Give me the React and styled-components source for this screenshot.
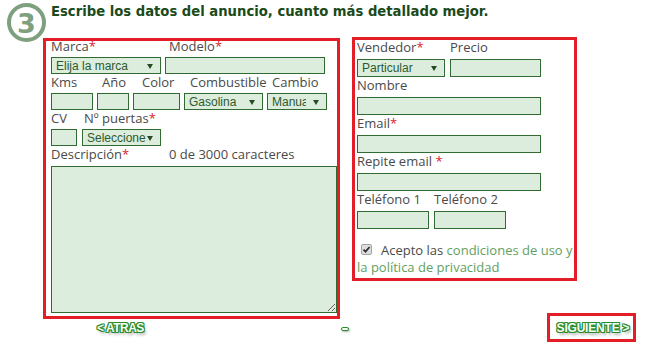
import React from 'react';
import styled, { createGlobalStyle } from 'styled-components';

const Global = createGlobalStyle`
  html, body { margin: 0; padding: 0; background: #fff; }
  body {
    font-family: "Open Sans", "Noto Sans", sans-serif;
    font-size: 13px;
    color: #4a4a4a;
  }
  * { box-sizing: border-box; }
`;

const RED = '#e41e26';
const FIELD_BG = '#ddeddd';
const FIELD_BORDER = '#306b30';

const Page = styled.div`
  width: 660px;
  height: 353px;
  overflow: hidden;
`;

const Header = styled.header`
  display: flex;
  align-items: flex-start;
  height: 37px;
`;

const Badge = styled.svg`
  flex: none;
  width: 41px;
  height: 41px;
  margin: 2px 0 0 6px;
  overflow: visible;
`;

const Title = styled.h1`
  margin: 4px 0 0 4px;
  font-family: "DejaVu Sans", Verdana, sans-serif;
  font-size: 13.2px;
  line-height: 16px;
  font-weight: bold;
  color: #1a4a1a;
  white-space: nowrap;
`;

const FormsRow = styled.div`
  display: flex;
  align-items: flex-start;
  gap: 12px;
  margin-left: 43px;
`;

const Box = styled.section`
  flex: none;
  width: ${p => p.$w}px;
  height: ${p => p.$h}px;
  margin-top: ${p => p.$top || 0}px;
  border: 3px solid ${RED};
  padding: 0 0 0 ${p => p.$pl}px;
`;

const Stack = styled.div`
  display: flex;
  flex-direction: column;
  margin-top: ${p => p.$shift || 0}px;
`;

const LabelRow = styled.div`
  display: flex;
  height: 15px;
  line-height: 15px;
  margin-bottom: ${p => p.$gap}px;
  white-space: nowrap;
`;

const Lbl = styled.span`
  flex: none;
  width: ${p => (p.$w ? `${p.$w}px` : 'auto')};
`;

const Req = styled.span`
  color: #d8232c;
`;

const ControlRow = styled.div`
  display: flex;
  gap: ${p => p.$gap || 4}px;
  margin-bottom: 1px;
`;

const TextInput = styled.input`
  flex: none;
  width: ${p => p.$w}px;
  height: ${p => p.$h}px;
  margin: 0;
  padding: 0 3px;
  border: 1px solid ${FIELD_BORDER};
  border-radius: 0;
  background: ${FIELD_BG};
  font: 12px "Liberation Sans", Arial, sans-serif;
  color: #2d5a2d;
  outline: none;
`;

const SelectWrap = styled.div`
  flex: none;
  position: relative;
  width: ${p => p.$w}px;
  height: ${p => p.$h}px;
  &::after {
    content: '';
    position: absolute;
    right: 8px;
    top: 50%;
    margin-top: -2px;
    border-left: 3px solid transparent;
    border-right: 3px solid transparent;
    border-top: 5px solid #274a27;
    pointer-events: none;
  }
`;

const Select = styled.select`
  appearance: none;
  -webkit-appearance: none;
  display: block;
  width: 100%;
  height: 100%;
  margin: 0;
  padding: 0 ${p => p.$pr || 16}px 0 4px;
  border: 1px solid ${FIELD_BORDER};
  border-radius: 0;
  background: ${FIELD_BG};
  font: 12px "Liberation Sans", Arial, sans-serif;
  color: #2d5a2d;
  outline: none;
`;

const TextArea = styled.textarea`
  display: block;
  width: ${p => p.$w}px;
  height: ${p => p.$h}px;
  margin: 0;
  border: 1px solid ${FIELD_BORDER};
  border-radius: 0;
  background: ${FIELD_BG};
  outline: none;
  font: 12px "Liberation Sans", Arial, sans-serif;
`;

const Terms = styled.p`
  margin: 12px 0 0;
  line-height: 17px;
  white-space: nowrap;
`;

const Check = styled.svg`
  width: 11px;
  height: 11px;
  margin: 0 9px 0 4px;
  vertical-align: 0;
`;

const Link = styled.a`
  color: #62a062;
  text-decoration: none;
`;

const NavRow = styled.nav`
  display: flex;
  align-items: center;
  width: 636px;
  height: 29px;
  margin-top: -6px;
  padding-left: 97px;
`;

const OutlineText = styled.a`
  font-family: "Liberation Sans", Arial, sans-serif;
  font-weight: bold;
  font-size: ${p => p.$size}px;
  letter-spacing: ${p => p.$ls || 0}px;
  color: #f4fff4;
  text-decoration: none;
  white-space: nowrap;
  text-shadow:
    -1px -1px 0 #2b8c2b, 1px -1px 0 #2b8c2b,
    -1px 1px 0 #2b8c2b, 1px 1px 0 #2b8c2b,
    0 -1px 0 #2b8c2b, 0 1px 0 #2b8c2b,
    -1px 0 0 #2b8c2b, 1px 0 0 #2b8c2b,
    2px 3px 3px rgba(0, 0, 0, 0.35);
`;

const Middle = styled.div`
  flex: 1;
  display: flex;
  justify-content: center;
`;

const Pill = styled.span`
  width: 8px;
  height: 4px;
  margin-top: 3px;
  border: 1px solid #2b8c2b;
  border-radius: 2px;
  background: #f4fff4;
  box-shadow: 1px 1px 2px rgba(0, 0, 0, 0.3);
`;

const NextBox = styled.div`
  flex: none;
  width: 89px;
  height: 29px;
  border: 3px solid ${RED};
  display: flex;
  align-items: center;
  justify-content: center;
  padding-left: 3px;
`;

export default function App() {
  return (
    <Page>
      <Global />
      <Header>
        <Badge viewBox="0 0 41 41">
          <circle cx="20.5" cy="20.5" r="17.5" fill="none" stroke="#7fa07f" strokeWidth="4" />
          <text
            x="20.5"
            y="31"
            textAnchor="middle"
            fontFamily="DejaVu Sans, sans-serif"
            fontWeight="bold"
            fontSize="27"
            fill="#7fa07f"
          >
            3
          </text>
        </Badge>
        <Title>Escribe los datos del anuncio, cuanto más detallado mejor.</Title>
      </Header>

      <FormsRow>
        <Box $w={297} $h={281} $top={1} $pl={5}>
          <Stack $shift={-2}>
            <LabelRow $gap={3}>
              <Lbl $w={118}>Marca<Req>*</Req></Lbl>
              <Lbl>Modelo<Req>*</Req></Lbl>
            </LabelRow>
            <ControlRow $gap={4}>
              <SelectWrap $w={110} $h={17}>
                <Select defaultValue="m"><option value="m">Elija la marca</option></Select>
              </SelectWrap>
              <TextInput $w={160} $h={17} />
            </ControlRow>

            <LabelRow $gap={3}>
              <Lbl $w={51}>Kms</Lbl>
              <Lbl $w={40}>Año</Lbl>
              <Lbl $w={48}>Color</Lbl>
              <Lbl $w={82}>Combustible</Lbl>
              <Lbl>Cambio</Lbl>
            </LabelRow>
            <ControlRow $gap={4}>
              <TextInput $w={42} $h={17} />
              <TextInput $w={32} $h={17} />
              <TextInput $w={47} $h={17} />
              <SelectWrap $w={79} $h={17}>
                <Select defaultValue="g"><option value="g">Gasolina</option></Select>
              </SelectWrap>
              <SelectWrap $w={60} $h={17}>
                <Select defaultValue="m" $pr={20}><option value="m">Manual</option></Select>
              </SelectWrap>
            </ControlRow>

            <LabelRow $gap={3}>
              <Lbl $w={33}>CV</Lbl>
              <Lbl>Nº puertas<Req>*</Req></Lbl>
            </LabelRow>
            <ControlRow $gap={5}>
              <TextInput $w={26} $h={17} />
              <SelectWrap $w={79} $h={17}>
                <Select defaultValue="s" $pr={12}><option value="s">Seleccione</option></Select>
              </SelectWrap>
            </ControlRow>

            <LabelRow $gap={4}>
              <Lbl $w={118}>Descripción<Req>*</Req></Lbl>
              <Lbl>0 de 3000 caracteres</Lbl>
            </LabelRow>
            <TextArea $w={286} $h={147} />
          </Stack>
        </Box>

        <Box $w={225} $h={244} $pl={2}>
          <Stack>
            <LabelRow $gap={4}>
              <Lbl $w={93}>Vendedor<Req>*</Req></Lbl>
              <Lbl>Precio</Lbl>
            </LabelRow>
            <ControlRow $gap={5}>
              <SelectWrap $w={88} $h={18}>
                <Select defaultValue="p"><option value="p">Particular</option></Select>
              </SelectWrap>
              <TextInput $w={91} $h={18} />
            </ControlRow>

            <LabelRow $gap={4}>
              <Lbl>Nombre</Lbl>
            </LabelRow>
            <ControlRow>
              <TextInput $w={184} $h={18} />
            </ControlRow>

            <LabelRow $gap={4}>
              <Lbl>Email<Req>*</Req></Lbl>
            </LabelRow>
            <ControlRow>
              <TextInput $w={184} $h={18} />
            </ControlRow>

            <LabelRow $gap={4}>
              <Lbl>Repite email <Req>*</Req></Lbl>
            </LabelRow>
            <ControlRow>
              <TextInput $w={184} $h={18} />
            </ControlRow>

            <LabelRow $gap={4}>
              <Lbl $w={77}>Teléfono 1</Lbl>
              <Lbl>Teléfono 2</Lbl>
            </LabelRow>
            <ControlRow $gap={5}>
              <TextInput $w={72} $h={18} />
              <TextInput $w={72} $h={18} />
            </ControlRow>

            <Terms>
              <Check viewBox="0 0 11 11">
                <rect x="0.5" y="0.5" width="10" height="10" rx="1.5" fill="#dedede" stroke="#a3a3a3" />
                <path d="M2.5 5.6 L4.5 7.6 L8.6 3" fill="none" stroke="#2f2f2f" strokeWidth="1.8" />
              </Check>
              Acepto las <Link href="#">condiciones de uso y</Link>
              <br />
              <Link href="#">la política de privacidad</Link>
            </Terms>
          </Stack>
        </Box>
      </FormsRow>

      <NavRow>
        <OutlineText href="#" $size={12} $ls={-0.5}>&lt; ATRAS</OutlineText>
        <Middle>
          <Pill />
        </Middle>
        <NextBox>
          <OutlineText href="#" $size={12} $ls={-0.2}>SIGUIENTE &gt;</OutlineText>
        </NextBox>
      </NavRow>
    </Page>
  );
}
